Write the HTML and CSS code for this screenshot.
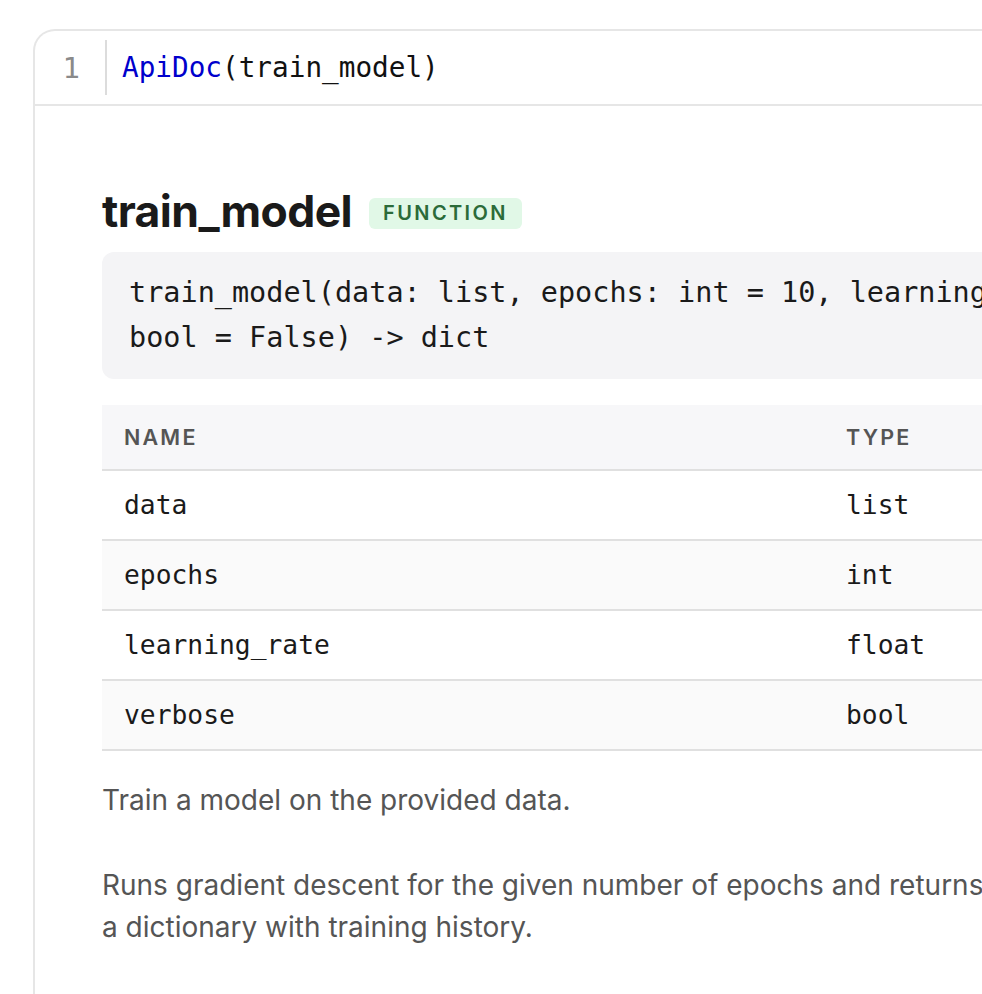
FILE: index.html
```html
<!DOCTYPE html>
<html lang="en">
<head>
<meta charset="utf-8">
<title>ApiDoc(train_model)</title>
<link rel="stylesheet" href="styles.css">
</head>
<body>
<div class="page">
  <div class="cell">
    <div class="input">
      <div class="gutter">1</div>
      <div class="code"><span class="fn">ApiDoc</span>(train_model)</div>
    </div>
    <div class="output">
      <div class="doc-head">
        <h1 class="doc-title">train_model</h1>
        <span class="badge">FUNCTION</span>
      </div>
      <pre class="signature">train_model(data: list, epochs: int = 10, learning_rate: float = 0.01, verbose:
bool = False) -&gt; dict</pre>
      <table class="params">
        <thead>
          <tr><th class="col-name">Name</th><th class="col-type">Type</th><th class="col-default">Default</th></tr>
        </thead>
        <tbody>
          <tr><td>data</td><td>list</td><td></td></tr>
          <tr><td>epochs</td><td>int</td><td>10</td></tr>
          <tr><td>learning_rate</td><td>float</td><td>0.01</td></tr>
          <tr><td>verbose</td><td>bool</td><td>False</td></tr>
        </tbody>
      </table>
      <div class="desc">
        <p>Train a model on the provided data.</p>
        <p>Runs gradient descent for the given number of epochs and returns<br>a dictionary with training history.</p>
      </div>
    </div>
  </div>
</div>
</body>
</html>
```
FILE: styles.css
```css
html, body {
  margin: 0;
  padding: 0;
  background: #ffffff;
  overflow: hidden;
}
body {
  width: 982px;
  height: 994px;
  font-family: Inter, "Noto Sans", sans-serif;
}
.page {
  padding: 29px 0 0 33px;
}
.cell {
  width: 1500px;
  min-height: 1100px;
  border: 2px solid #e6e6e6;
  border-bottom: none;
  border-radius: 22px 22px 0 0;
  box-sizing: border-box;
}
.input {
  display: flex;
  height: 75px;
  border-bottom: 2px solid #e6e6e6;
  box-sizing: border-box;
}
.gutter {
  width: 72px;
  box-sizing: border-box;
  margin: 9px 0;
  padding-right: 25px;
  border-right: 2px solid #dcdcdc;
  display: flex;
  align-items: center;
  justify-content: flex-end;
  font-family: "DejaVu Sans Mono", monospace;
  font-size: 29px;
  color: #8a8a8a;
}
.code {
  display: flex;
  align-items: center;
  padding-left: 15px;
  font-family: "DejaVu Sans Mono", monospace;
  font-size: 27.7px;
  color: #111111;
}
.fn {
  color: #0000cc;
}
.output {
  padding: 80px 0 0 67px;
}
.doc-head {
  display: flex;
  align-items: center;
  gap: 17px;
  height: 50px;
}
.doc-title {
  margin: 0;
  font-size: 44.5px;
  font-weight: 700;
  line-height: 50px;
  letter-spacing: -0.6px;
  color: #1a1a1a;
}
.badge {
  display: inline-block;
  padding: 0 14px;
  height: 31px;
  line-height: 31px;
  border-radius: 6px;
  background: #e1f8e7;
  color: #2b6b39;
  font-size: 20px;
  font-weight: 600;
  letter-spacing: 2.4px;
  margin-top: 4px;
}
.signature {
  margin: 16px 0 0 0;
  padding: 18px 27px 19px 27px;
  background: #f4f4f6;
  border-radius: 12px;
  font-family: "DejaVu Sans Mono", monospace;
  font-size: 28.5px;
  line-height: 45px;
  color: #1a1a1a;
  white-space: pre;
}
.params {
  margin-top: 26px;
  width: 1300px;
  border-collapse: collapse;
}
.params th {
  height: 64px;
  padding: 0 22px;
  text-align: left;
  background: #f7f7f9;
  border-bottom: 2px solid #e0e0e0;
  font-size: 21.5px;
  font-weight: 600;
  letter-spacing: 2.2px;
  text-transform: uppercase;
  color: #555555;
}
.params .col-name {
  width: 722px;
  box-sizing: border-box;
}
.params .col-type {
  width: 300px;
}
.params td {
  height: 68px;
  padding: 0 22px;
  border-bottom: 2px solid #e0e0e0;
  font-family: "DejaVu Sans Mono", monospace;
  font-size: 26.3px;
  color: #1a1a1a;
}
.params tbody tr:nth-child(even) td {
  background: #fafafa;
}
.desc {
  margin-top: 28px;
  font-size: 28px;
  line-height: 42px;
  color: #555555;
}
.desc p {
  margin: 0 0 43px 0;
}
```
